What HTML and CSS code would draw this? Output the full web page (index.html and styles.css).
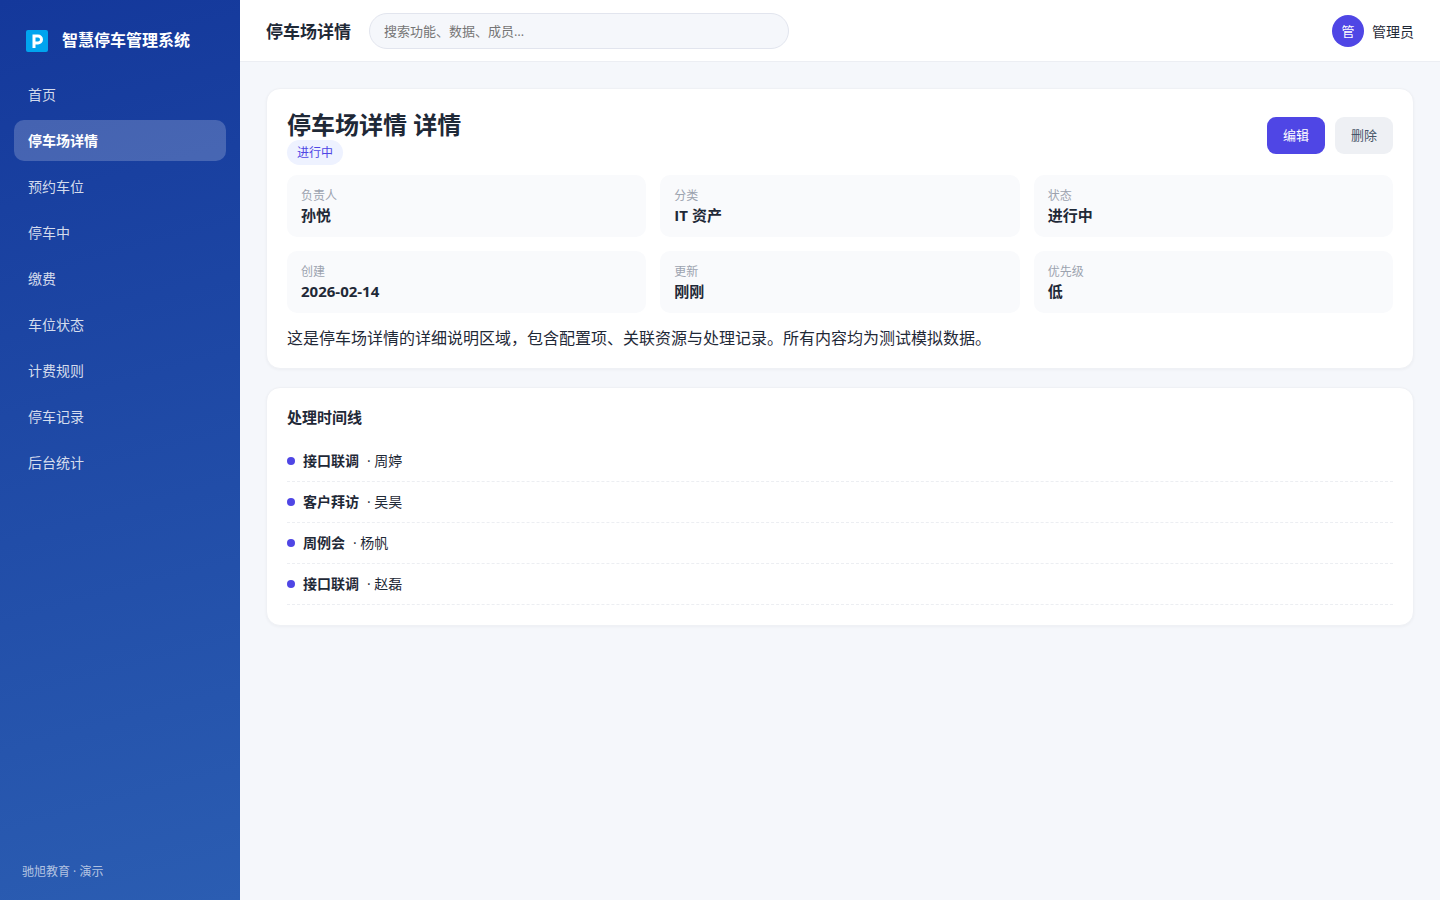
FILE: index.html
```html
<!DOCTYPE html>
<html lang="zh-CN">
<head>
  <meta charset="UTF-8">
  <meta name="viewport" content="width=device-width, initial-scale=1">
  <title>停车场详情</title>
  <link rel="stylesheet" href="styles.css">
</head>
<body>
  <div class="app">
    <aside class="sidebar">
      <div class="brand">
        <svg class="brand-logo" viewBox="0 0 22 22" aria-hidden="true">
          <rect width="22" height="22" rx="2" fill="#00a4ef"/>
          <path d="M8 18V6H12A3 3 0 0 1 12 13H8" fill="none" stroke="#fff" stroke-width="3"/>
        </svg>
        <span>智慧停车管理系统</span>
      </div>
      <nav class="nav">
        <a href="#">首页</a>
        <a href="#" class="active">停车场详情</a>
        <a href="#">预约车位</a>
        <a href="#">停车中</a>
        <a href="#">缴费</a>
        <a href="#">车位状态</a>
        <a href="#">计费规则</a>
        <a href="#">停车记录</a>
        <a href="#">后台统计</a>
      </nav>
      <div class="sidebar-foot">驰旭教育 · 演示</div>
    </aside>

    <div class="main">
      <header class="topbar">
        <div class="topbar-title">停车场详情</div>
        <input class="search" type="search" placeholder="搜索功能、数据、成员…" aria-label="搜索">
        <div class="user">
          <span class="avatar">管</span>
          <span>管理员</span>
        </div>
      </header>

      <main class="content">
        <section class="card">
          <div class="detail-head">
            <div>
              <h1>停车场详情 详情</h1>
              <span class="badge">进行中</span>
            </div>
            <div class="actions">
              <button type="button" class="btn btn-primary">编辑</button>
              <button type="button" class="btn btn-ghost">删除</button>
            </div>
          </div>
          <dl class="meta-grid">
            <div class="meta"><dt>负责人</dt><dd>孙悦</dd></div>
            <div class="meta"><dt>分类</dt><dd>IT 资产</dd></div>
            <div class="meta"><dt>状态</dt><dd>进行中</dd></div>
            <div class="meta"><dt>创建</dt><dd>2026-02-14</dd></div>
            <div class="meta"><dt>更新</dt><dd>刚刚</dd></div>
            <div class="meta"><dt>优先级</dt><dd>低</dd></div>
          </dl>
          <p class="desc">这是停车场详情的详细说明区域，包含配置项、关联资源与处理记录。所有内容均为测试模拟数据。</p>
        </section>

        <section class="card">
          <h2>处理时间线</h2>
          <ul class="timeline">
            <li><i class="dot"></i><b>接口联调</b><span>· 周婷</span></li>
            <li><i class="dot"></i><b>客户拜访</b><span>· 吴昊</span></li>
            <li><i class="dot"></i><b>周例会</b><span>· 杨帆</span></li>
            <li><i class="dot"></i><b>接口联调</b><span>· 赵磊</span></li>
          </ul>
        </section>
      </main>
    </div>
  </div>
</body>
</html>
```
FILE: styles.css
```css
* { box-sizing: border-box; }
body {
  margin: 0;
  font-family: "Open Sans", "Noto Sans CJK SC", sans-serif;
  font-size: 16px;
  color: #1f2937;
  background: #f5f7fb;
}
h1, h2, p, ul, dl, dd { margin: 0; padding: 0; }

.app {
  display: flex;
  min-height: 100vh;
}

/* sidebar */
.sidebar {
  width: 240px;
  flex-shrink: 0;
  display: flex;
  flex-direction: column;
  padding: 20px 14px;
  color: #fff;
  background: linear-gradient(165deg, #14389b, #2b5db2);
}
.brand {
  display: flex;
  align-items: center;
  gap: 14px;
  height: 42px;
  padding: 0 12px;
  margin-bottom: 12px;
  font-size: 16px;
  line-height: 24px;
  font-weight: 700;
}
.brand span { padding-bottom: 2px; }
.brand-logo {
  width: 22px;
  height: 22px;
}
.nav {
  display: flex;
  flex-direction: column;
  gap: 5px;
}
.nav a {
  padding: 10px 14px;
  border-radius: 10px;
  font-size: 14px;
  line-height: 21px;
  color: rgba(255,255,255,0.82);
  text-decoration: none;
}
.nav a:hover { background: rgba(255,255,255,0.1); }
.nav .active,
.nav .active:hover {
  color: #fff;
  font-weight: 700;
  background: rgba(255,255,255,0.2);
}
.sidebar-foot {
  margin-top: auto;
  padding: 0 8px;
  font-size: 12px;
  line-height: 16px;
  color: rgba(255,255,255,0.65);
}

/* topbar */
.main {
  flex: 1;
  min-width: 0;
}
.topbar {
  display: flex;
  align-items: center;
  gap: 18px;
  height: 62px;
  padding: 0 26px;
  background: #fff;
  border-bottom: 1px solid #eceef3;
}
.topbar-title {
  font-size: 17px;
  font-weight: 700;
}
.search {
  width: 420px;
  height: 36px;
  padding: 0 14px;
  border: 1px solid #e2e5ee;
  border-radius: 18px;
  background: #f5f7fb;
  font-family: inherit;
  font-size: 13px;
  outline: none;
}
.search::placeholder { color: #757575; }
.user {
  display: flex;
  align-items: center;
  gap: 8px;
  margin-left: auto;
  font-size: 14px;
}
.avatar {
  display: flex;
  align-items: center;
  justify-content: center;
  width: 32px;
  height: 32px;
  border-radius: 50%;
  background: #4f46e5;
  color: #fff;
  font-size: 13px;
}

/* cards */
.content {
  display: flex;
  flex-direction: column;
  gap: 18px;
  padding: 26px;
}
.card {
  padding: 20px;
  background: #fff;
  border: 1px solid #eff1f5;
  border-radius: 14px;
  box-shadow: 0 1px 3px rgba(15,23,42,0.04);
}
.detail-head {
  display: flex;
  justify-content: space-between;
  align-items: flex-start;
  margin-bottom: 10px;
}
h1 {
  font-size: 24px;
  line-height: 31px;
}
.badge {
  display: block;
  width: fit-content;
  padding: 4px 10px;
  border-radius: 13px;
  background: #eef2ff;
  color: #4f46e5;
  font-size: 12px;
  line-height: 17px;
}
.actions {
  display: flex;
  gap: 10px;
  padding-top: 8px;
}
.btn {
  padding: 8px 16px;
  border: none;
  border-radius: 9px;
  font-family: inherit;
  font-size: 13px;
  line-height: 21px;
  cursor: pointer;
}
.btn-primary {
  background: #4f46e5;
  color: #fff;
}
.btn-ghost {
  background: #eef0f4;
  color: #475569;
}
.meta-grid {
  display: grid;
  grid-template-columns: repeat(3, 1fr);
  gap: 14px;
}
.meta {
  padding: 12px 14px;
  border-radius: 10px;
  background: #f9fafc;
}
.meta dt {
  font-size: 12px;
  line-height: 18px;
  color: #9ca3af;
}
.meta dd {
  font-size: 15px;
  line-height: 20px;
  font-weight: 700;
}
.desc {
  margin-top: 16px;
  line-height: 19px;
}

/* timeline */
h2 {
  margin-bottom: 14px;
  font-size: 15px;
  line-height: 19px;
}
.timeline { list-style: none; }
.timeline li {
  display: flex;
  align-items: center;
  gap: 8px;
  padding: 10px 0;
  border-bottom: 1px dashed #eceef2;
  font-size: 14px;
  line-height: 20px;
}
.dot {
  width: 8px;
  height: 8px;
  border-radius: 50%;
  background: #4f46e5;
}
```
